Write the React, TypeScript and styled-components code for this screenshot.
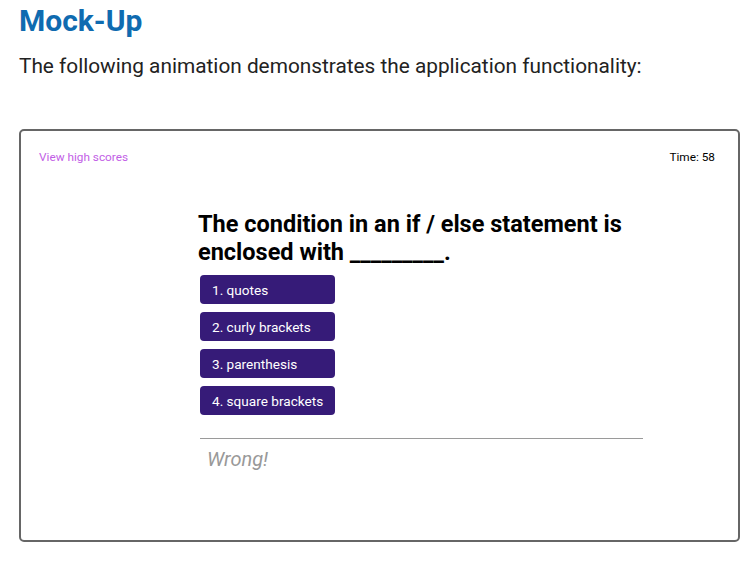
import React from "react";
import styled, { createGlobalStyle } from "styled-components";

const Global = createGlobalStyle`
  html, body { margin: 0; padding: 0; background: #ffffff; }
  body { font-family: Roboto, "Liberation Sans", sans-serif; }
`;

const Page = styled.div`
  padding: 0 12px 0 19px;
  display: flex;
  flex-direction: column;
`;

const Title = styled.h1`
  margin: 3px 0 0;
  font-size: 30px;
  line-height: 36px;
  font-weight: 700;
  color: #0f6bb0;
`;

const Intro = styled.p`
  margin: 14px 0 0;
  font-size: 20.8px;
  line-height: 26px;
  color: #222222;
`;

const Frame = styled.div`
  margin-top: 50px;
  width: 717px;
  height: 409px;
  border: 2px solid #666666;
  border-radius: 5px;
  box-sizing: content-box;
  display: flex;
  flex-direction: column;
`;

const TopBar = styled.div`
  display: flex;
  justify-content: space-between;
  align-items: center;
  padding: 18px 23px 0 18px;
  font-size: 11.8px;
  line-height: 16px;
`;

const HighScores = styled.a`
  color: #c25ee6;
  text-decoration: none;
`;

const Timer = styled.span`
  color: #000000;
`;

const Quiz = styled.div`
  width: 445px;
  margin: 45px 0 0 177px;
  display: flex;
  flex-direction: column;
`;

const Question = styled.h2`
  margin: 0;
  font-size: 23.5px;
  line-height: 28px;
  font-weight: 700;
  color: #000000;
`;

const Choices = styled.div`
  display: flex;
  flex-direction: column;
  gap: 8px;
  margin: 9px 0 0 2px;
`;

const Choice = styled.button`
  width: 135px;
  height: 29px;
  padding: 0 0 0 12px;
  border: none;
  border-radius: 4px;
  background: #361b78;
  color: #ffffff;
  font-family: Roboto, "Liberation Sans", sans-serif;
  font-size: 13.6px;
  text-align: left;
  cursor: pointer;
`;

const Feedback = styled.div`
  box-sizing: border-box;
  margin: 23px 0 0 2px;
  width: 443px;
  border-top: 1px solid #9a9a9a;
  padding: 8px 0 0 7px;
  font-size: 20px;
  line-height: 24px;
  font-style: italic;
  color: #999999;
`;

const choices = ["1. quotes", "2. curly brackets", "3. parenthesis", "4. square brackets"];

export default function App() {
  return (
    <>
      <Global />
      <Page>
        <Title>Mock-Up</Title>
        <Intro>The following animation demonstrates the application functionality:</Intro>
        <Frame>
          <TopBar>
            <HighScores href="#">View high scores</HighScores>
            <Timer>Time: 58</Timer>
          </TopBar>
          <Quiz>
            <Question>
              The condition in an if / else statement is enclosed with _________.
            </Question>
            <Choices>
              {choices.map((c) => (
                <Choice key={c}>{c}</Choice>
              ))}
            </Choices>
            <Feedback>Wrong!</Feedback>
          </Quiz>
        </Frame>
      </Page>
    </>
  );
}
